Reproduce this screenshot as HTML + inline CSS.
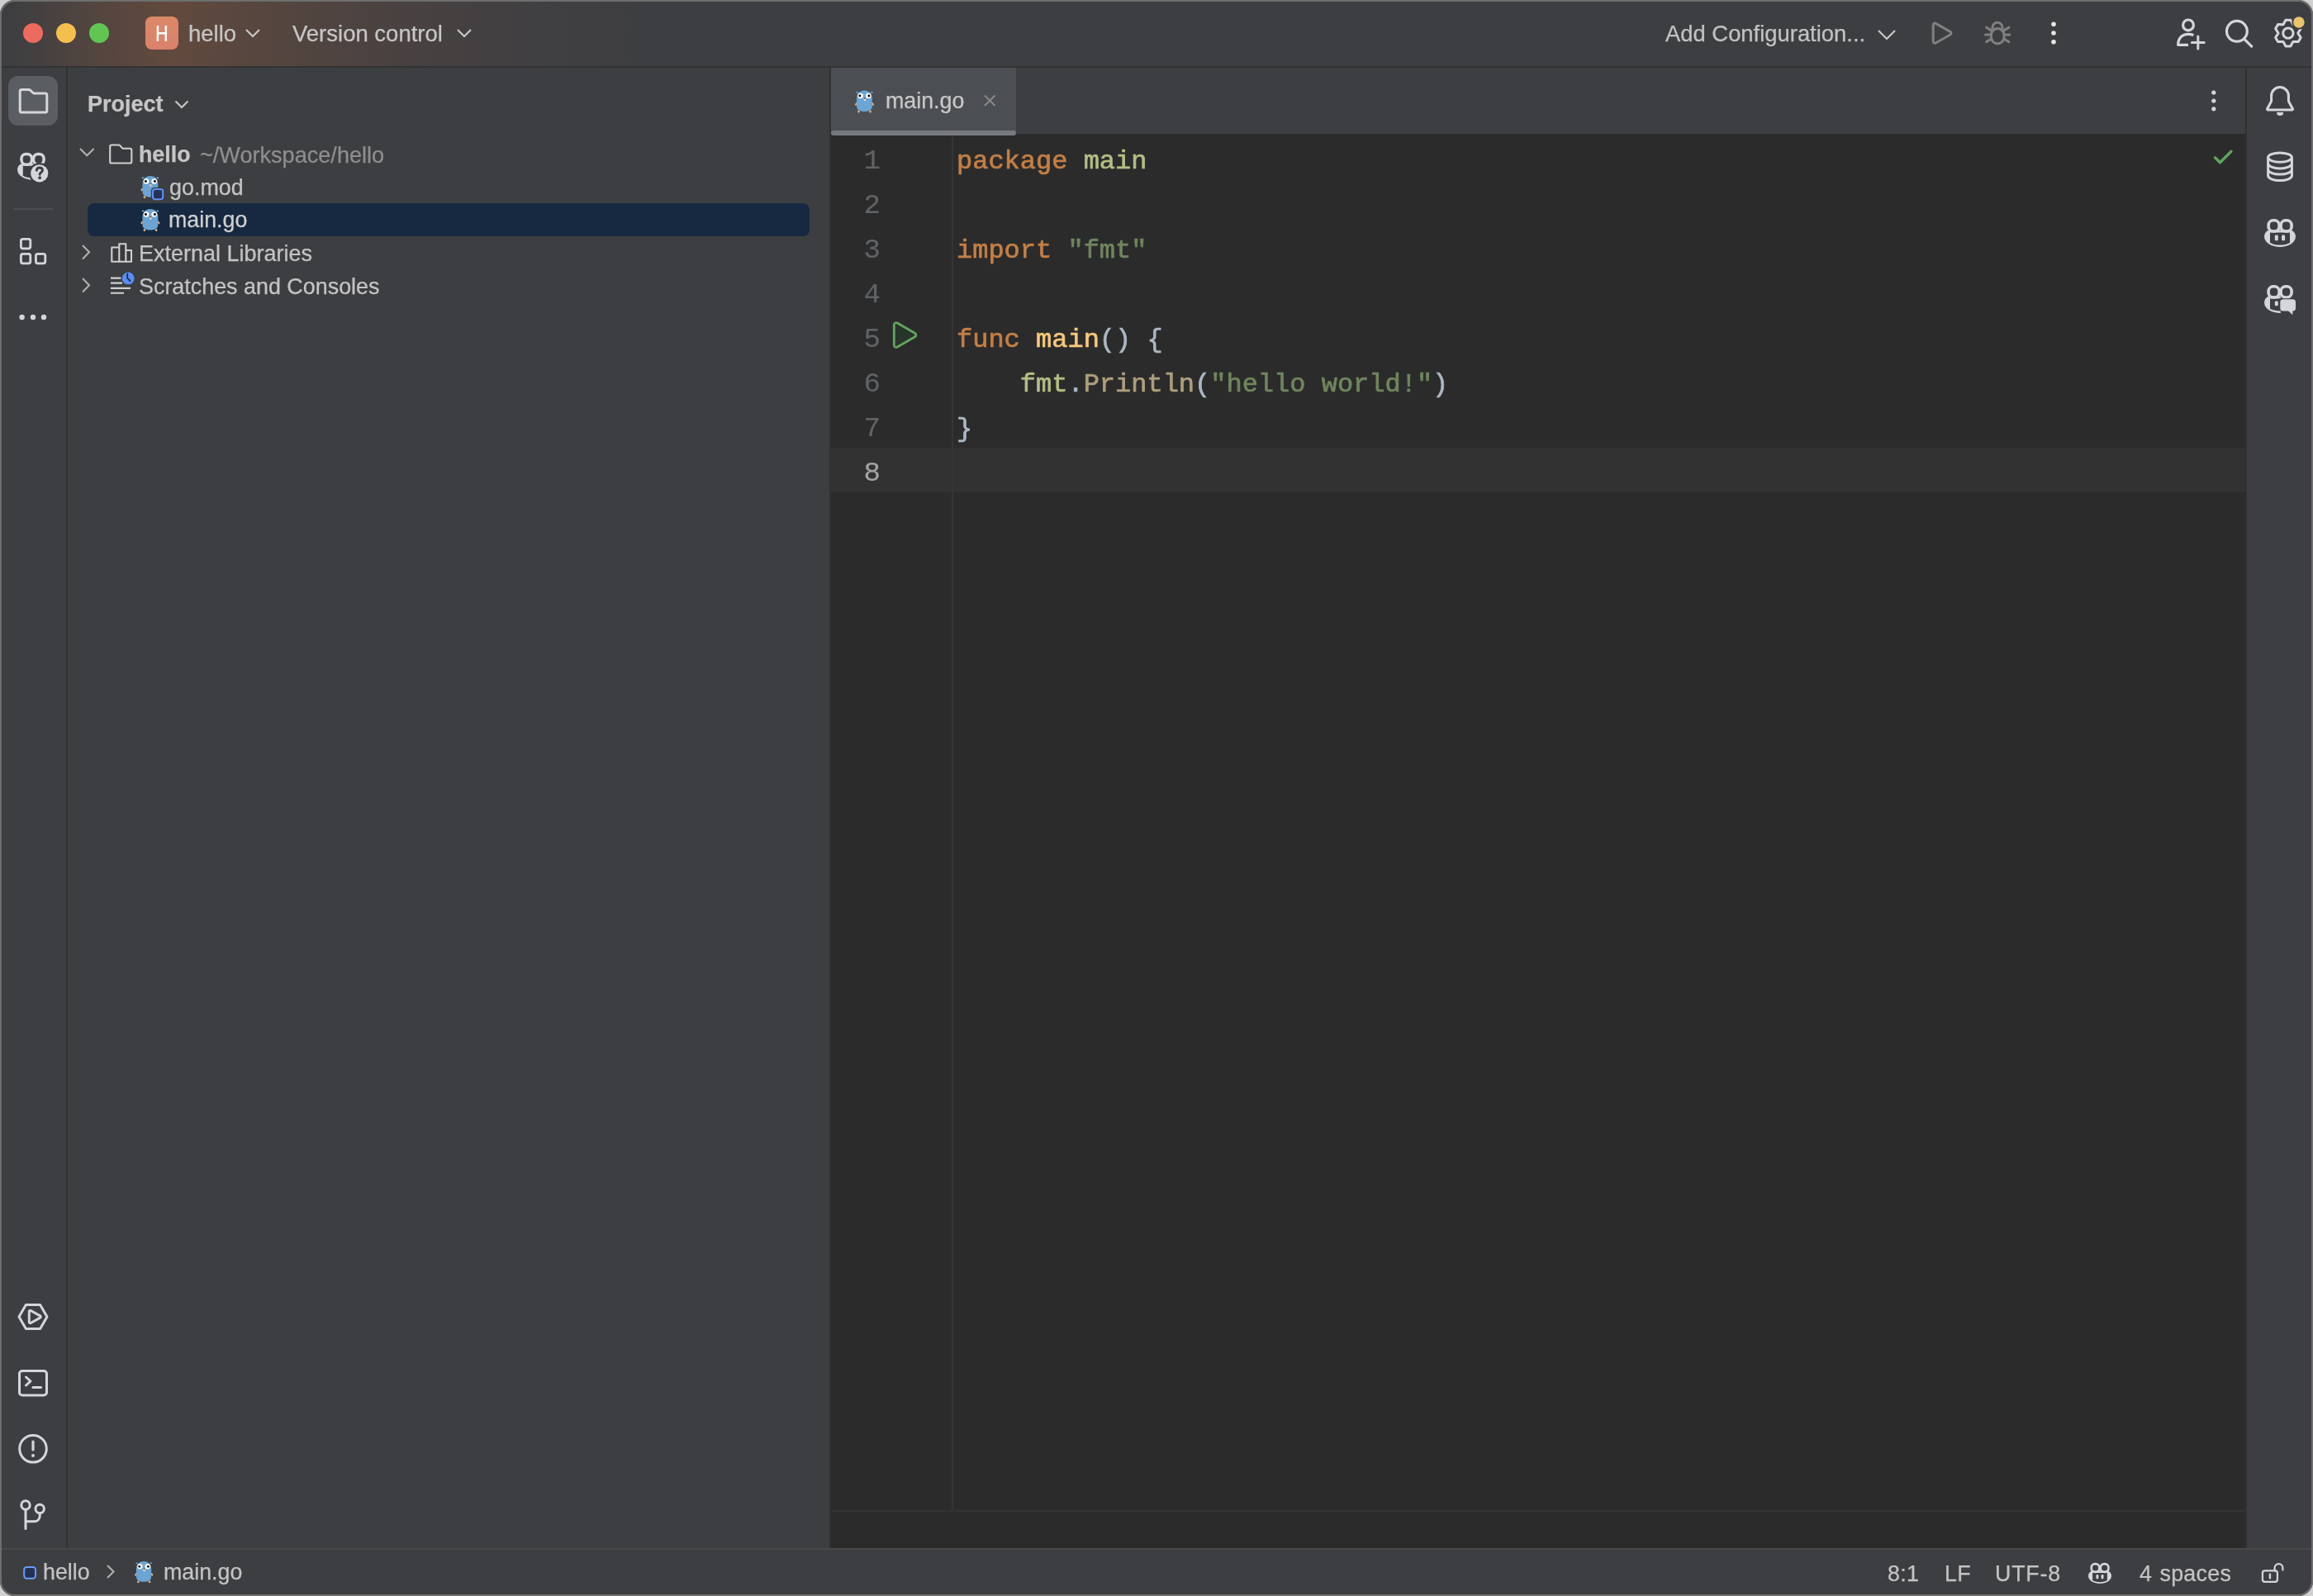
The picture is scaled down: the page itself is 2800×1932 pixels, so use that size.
<!DOCTYPE html>
<html><head><meta charset="utf-8">
<style>
*{margin:0;padding:0;box-sizing:border-box}
html,body{width:2800px;height:1932px;overflow:hidden;background:#d0d0d0}
body{font-family:"Liberation Sans",sans-serif;position:relative;-webkit-font-smoothing:antialiased}
#win{position:absolute;left:0;top:0;width:2800px;height:1932px;border-radius:18px;background:#3d3e41;overflow:hidden}
#frame{position:absolute;left:0;top:0;width:2800px;height:1932px;border-radius:18px;border:2px solid #6e6e6e;pointer-events:none}
.p{position:absolute}
.tl{position:absolute;width:24px;height:24px;border-radius:50%}
.ui{position:absolute;font-family:"Liberation Sans",sans-serif;font-size:26.7px;color:#c4c4c4;white-space:nowrap;line-height:1;will-change:transform;-webkit-text-stroke:0.25px currentColor}
.code{font-family:"Liberation Mono",monospace;font-size:32px;line-height:54px;white-space:pre;position:absolute;-webkit-text-stroke:0.7px currentColor;will-change:transform}
.kw{color:#c47f45}.pk{color:#b2be85}.st{color:#70865e}.fn{color:#f6c87b}.df{color:#acb7c4}.cl{color:#ad9e7d}
.ln{color:#606366}
svg{position:absolute;overflow:visible}
</style></head><body>
<div id="win">
  <!-- ============ title bar ============ -->
  <div class="p" style="left:0;top:0;width:1100px;height:80px;background:linear-gradient(90deg,rgba(100,74,62,0) 10px,rgba(100,74,62,.55) 110px,rgba(100,74,62,.95) 207px,rgba(92,72,62,.75) 330px,rgba(88,70,64,.45) 480px,rgba(80,68,66,.18) 640px,rgba(61,62,65,0) 780px)"></div>
  <div class="tl" style="left:28px;top:28px;background:#ed6a5e"></div>
  <div class="tl" style="left:68px;top:28px;background:#f5bf4f"></div>
  <div class="tl" style="left:108px;top:28px;background:#61c554"></div>
  <div class="p" style="left:176px;top:20px;width:40px;height:40px;border-radius:8px;background:linear-gradient(160deg,#dc8a66 0%,#d9806c 100%)"></div>
  <svg style="left:0;top:0" width="1" height="1"><path d="M190.9 31v19M200.8 31v19M190.9 40.2h9.9" stroke="#fff" stroke-width="2.5" fill="none"/></svg>
  <div class="ui" style="left:228.4px;top:26.7px;color:#c6c6c6;font-size:27.5px">hello</div>
  <svg style="left:0;top:0" width="1" height="1"><path d="M298 36l8 8l8-8" stroke="#c8c8c8" stroke-width="2.2" fill="none"/></svg>
  <div class="ui" style="left:354.2px;top:26.7px;color:#c6c6c6;font-size:27.5px">Version control</div>
  <svg style="left:0;top:0" width="1" height="1"><path d="M554 36l8 8l8-8" stroke="#c8c8c8" stroke-width="2.2" fill="none"/></svg>
  <div class="ui" style="left:2016.2px;top:26.7px;color:#c2c2c2;font-size:27.4px">Add Configuration...</div>
  <svg style="left:0;top:0" width="1" height="1"><path d="M2274 37l10 10l10-10" stroke="#c8c8c8" stroke-width="2.2" fill="none"/></svg>
  <svg style="left:0;top:0" width="1" height="1">
    <path d="M2340.2 30.2c0-1.6 1.7-2.6 3.1-1.8l17.6 10c1.4 0.8 1.4 2.8 0 3.6l-17.6 10c-1.4 0.8-3.1-0.2-3.1-1.8z" fill="none" stroke="#808080" stroke-width="3" stroke-linejoin="round"/>
    <path d="M2412 35.5v-2.2a6 6 0 0 1 12 0v2.2" fill="none" stroke="#808080" stroke-width="3"/>
    <rect x="2410.4" y="34.6" width="15.6" height="18.2" rx="7.8" fill="none" stroke="#808080" stroke-width="3"/>
    <path d="M2404.6 33.2l5.6 3.4M2403.5 42h6M2404.6 50.6l5.6-3.4M2431.8 33.2l-5.6 3.4M2432.9 42h-6M2431.8 50.6l-5.6-3.4" stroke="#808080" stroke-width="3" stroke-linecap="round"/>
    <circle cx="2486" cy="29.2" r="2.8" fill="#e6e6e6"/><circle cx="2486" cy="40" r="2.8" fill="#e6e6e6"/><circle cx="2486" cy="50.8" r="2.8" fill="#e6e6e6"/>
    <circle cx="2649" cy="30.4" r="6.4" fill="none" stroke="#d4d6db" stroke-width="3.2"/>
    <path d="M2655.4 42.6C2653 41.7 2651 41.3 2649 41.3C2641.5 41.3 2636.6 46.7 2636.6 54.3H2649" fill="none" stroke="#d4d6db" stroke-width="3.2" stroke-linejoin="round"/>
    <path d="M2660.8 44.1v14.8M2653.4 51.5h14.8" stroke="#d4d6db" stroke-width="3" stroke-linecap="round"/>
    <circle cx="2707.9" cy="37.8" r="12.4" fill="none" stroke="#d4d6db" stroke-width="3.2"/>
    <path d="M2716.5 47.2l9.2 9" stroke="#d4d6db" stroke-width="3.2" stroke-linecap="round"/>
    <path d="M2775.85 29.79 L2772.85 24.17 L2766.95 24.17 L2763.95 29.79 L2757.58 29.58 L2754.63 34.69 L2758.00 40.10 L2754.63 45.51 L2757.58 50.62 L2763.95 50.41 L2766.95 56.03 L2772.85 56.03 L2775.85 50.41 L2782.22 50.62 L2785.17 45.51 L2781.80 40.10 L2785.17 34.69 L2782.22 29.58Z" fill="none" stroke="#d4d6db" stroke-width="3" stroke-linejoin="round"/><circle cx="2769.9" cy="40.1" r="6.2" fill="none" stroke="#d4d6db" stroke-width="3"/>
    <circle cx="2782.9" cy="27" r="8.6" fill="#3d3e41"/><circle cx="2782.9" cy="27" r="6.8" fill="#e9c56b"/>
  </svg>
  <div class="p" style="left:0;top:80px;width:2800px;height:2px;background:#323232"></div>

  <!-- ============ left strip ============ -->
  <div class="p" style="left:80px;top:82px;width:2px;height:1792px;background:#313131"></div>
  <div class="p" style="left:10px;top:92px;width:60px;height:60px;border-radius:12px;background:#5a5d61"></div>
  <svg style="left:0;top:0" width="1" height="1">
    <path d="M26.2 108.6h8.6c0.8 0 1.4 0.3 2 0.8l3.9 3.6h14.1c1.1 0 2 0.9 2 2v18.9c0 1.1-0.9 2-2 2h-28.6c-1.1 0-2-0.9-2-2v-23.3c0-1.1 0.9-2 2-2z" fill="none" stroke="#d4d6db" stroke-width="3" stroke-linejoin="round"/>
    <g transform="translate(20.8,184.7) scale(0.97)"><path d="M0.3 21.5C0.3 17 3 14.6 6 13.6H20V34C9.4 34 0.3 29 0.3 21.5Z" fill="#d4d6db"/><path d="M7.2 16.5H20V31.6C15.4 31.4 10.4 30.8 7.2 28.8Z" fill="#3d3e41"/><rect x="5.3" y="1.8" width="13" height="13.2" rx="5.8" fill="none" stroke="#d4d6db" stroke-width="3.6"/><rect x="20.3" y="1.8" width="13" height="13.2" rx="5.8" fill="none" stroke="#d4d6db" stroke-width="3.6"/><circle cx="27.8" cy="25.9" r="13.2" fill="#3d3e41"/><circle cx="27.8" cy="25.9" r="10.9" fill="#d4d6db"/><path d="M24.3 22.2C24.3 19.9 26 18.8 27.9 18.8C30 18.8 31.6 20 31.6 22C31.6 24.6 28.2 24.7 28.2 27.4" fill="none" stroke="#3d3e41" stroke-width="3" stroke-linecap="round"/><circle cx="28.2" cy="31.4" r="1.9" fill="#3d3e41"/></g>
    <path d="M16 253h48" stroke="#4a4d52" stroke-width="2"/>
    <rect x="25.4" y="289.4" width="11.4" height="11.4" rx="2.2" fill="none" stroke="#d4d6db" stroke-width="2.8"/>
    <rect x="25.4" y="307.4" width="11.4" height="11.4" rx="2.2" fill="none" stroke="#d4d6db" stroke-width="2.8"/>
    <rect x="43.4" y="307.4" width="11.4" height="11.4" rx="2.2" fill="none" stroke="#d4d6db" stroke-width="2.8"/>
    <circle cx="26.6" cy="384" r="3.2" fill="#d4d6db"/><circle cx="40" cy="384" r="3.2" fill="#d4d6db"/><circle cx="53" cy="384" r="3.2" fill="#d4d6db"/>
    <path d="M31.4 1579.6h17.2l8.4 14.4l-8.4 14.4h-17.2l-8.4-14.4z" fill="none" stroke="#d4d6db" stroke-width="3" stroke-linejoin="round"/>
    <path d="M35.3 1587.6c0-1 1-1.6 1.9-1.1l11.4 6.4c0.9 0.5 0.9 1.7 0 2.2l-11.4 6.4c-0.9 0.5-1.9-0.1-1.9-1.1z" fill="none" stroke="#d4d6db" stroke-width="3" stroke-linejoin="round"/>
    <rect x="23.5" y="1659.5" width="33" height="29.5" rx="3.5" fill="none" stroke="#d4d6db" stroke-width="3"/>
    <path d="M31.5 1667l5.5 5l-5.5 5" fill="none" stroke="#d4d6db" stroke-width="3" stroke-linecap="round" stroke-linejoin="round"/>
    <path d="M40 1679.5h9.5" stroke="#d4d6db" stroke-width="3" stroke-linecap="round"/>
    <circle cx="40" cy="1753.8" r="16.3" fill="none" stroke="#d4d6db" stroke-width="3"/>
    <path d="M40 1745v10" stroke="#d4d6db" stroke-width="3.2" stroke-linecap="round"/><circle cx="40" cy="1762" r="2" fill="#d4d6db"/>
    <circle cx="31" cy="1822" r="5.2" fill="none" stroke="#d4d6db" stroke-width="3"/>
    <circle cx="48.2" cy="1826.5" r="5.2" fill="none" stroke="#d4d6db" stroke-width="3"/>
    <path d="M31 1827.2V1850.5M48.2 1831.7v3.3c0 4-3 6.8-7 6.8H31" fill="none" stroke="#d4d6db" stroke-width="3" stroke-linecap="round"/>
  </svg>

  <!-- ============ project panel ============ -->
  <div class="ui" style="left:106px;top:113px;font-weight:bold;font-size:27px;color:#c6c6c6">Project</div>
  <svg style="left:0;top:0" width="1" height="1"><path d="M212.5 122.5l7.5 7.5l7.5-7.5" stroke="#c6c6c6" stroke-width="2.2" fill="none"/></svg>
  <div class="p" style="left:106px;top:246px;width:874px;height:40px;border-radius:8px;background:#172940"></div>
  <svg style="left:0;top:0" width="1" height="1">
    <path d="M97 180l8.3 8.3l8.3-8.3" stroke="#b0b0b0" stroke-width="2.1" fill="none"/>
    <path d="M135 175.5h8.5c1 0 1.6 0.4 2.2 1.1l2.6 3.1h9.2c1.1 0 1.8 0.7 1.8 1.8v14.2c0 1.1-0.7 1.8-1.8 1.8h-22.5c-1.1 0-1.8-0.7-1.8-1.8v-18.4c0-1.1 0.7-1.8 1.8-1.8z" stroke="#d0d0d0" stroke-width="2.1" fill="#393a3e" stroke-linejoin="round"/>
    <path d="M100 297l8 8.2l-8 8.2" stroke="#b0b0b0" stroke-width="2.1" fill="none"/>
    <path d="M100 337l8 8.2l-8 8.2" stroke="#b0b0b0" stroke-width="2.1" fill="none"/>
    <path d="M135.3 299.5h9v17.2h-9zM144.3 295.2h8v21.5h-8zM152.3 303h6.7v13.7h-6.7z" stroke="#d0d0d0" stroke-width="2.1" fill="#393a3e" stroke-linejoin="round"/>
    <path d="M134 336.6h12.5M134 342.6h14M134 348.9h24M134 354.8h16" stroke="#d0d0d0" stroke-width="2.1" fill="none"/>
    <circle cx="155.2" cy="336.9" r="7.4" fill="#5a8ef3"/><path d="M154.2 331.5v5.2l3.2 3.3" stroke="#1d2c48" stroke-width="1.8" fill="none" stroke-linecap="round"/>
    <g transform="translate(171.5,212.5)"><ellipse cx="1.6" cy="2.9" rx="1.4" ry="0.8" fill="#7bb2dd"/><ellipse cx="19.4" cy="2.9" rx="1.4" ry="0.8" fill="#7bb2dd"/><ellipse cx="0.4" cy="17" rx="1.1" ry="1.9" transform="rotate(30 0.4 17)" fill="#dfb38e"/><ellipse cx="20.6" cy="17" rx="1.1" ry="1.9" transform="rotate(-30 20.6 17)" fill="#dfb38e"/><ellipse cx="3.4" cy="26" rx="1.3" ry="1.6" fill="#dfb38e"/><ellipse cx="17.6" cy="26" rx="1.3" ry="1.6" fill="#dfb38e"/><path d="M1 10.5C1 3.8 5 0.4 10.4 0.4S19.8 3.8 19.8 10.5V19.5C19.8 24 16 26 10.4 26S1 24 1 19.5Z" fill="#6ca5d3"/><circle cx="5.6" cy="7" r="3.3" fill="#fff"/><circle cx="15.2" cy="7" r="3.3" fill="#fff"/><circle cx="4.9" cy="7" r="1.45" fill="#000"/><circle cx="15.9" cy="7" r="1.45" fill="#000"/><ellipse cx="10.8" cy="11" rx="1.6" ry="1.4" fill="#e6bfa0"/><rect x="10.1" y="11.8" width="1.5" height="1.3" fill="#fff"/><path d="M9.8 9.6h2l-1 1.3z" fill="#111"/></g>
    <rect x="182.8" y="226.8" width="16.6" height="16.6" rx="4.5" fill="#3d3e41"/>
    <rect x="185" y="229" width="12.2" height="12.2" rx="3" fill="#263153" stroke="#5f8ff2" stroke-width="2.1"/>
    <g transform="translate(171.5,252.5)"><ellipse cx="1.6" cy="2.9" rx="1.4" ry="0.8" fill="#7bb2dd"/><ellipse cx="19.4" cy="2.9" rx="1.4" ry="0.8" fill="#7bb2dd"/><ellipse cx="0.4" cy="17" rx="1.1" ry="1.9" transform="rotate(30 0.4 17)" fill="#dfb38e"/><ellipse cx="20.6" cy="17" rx="1.1" ry="1.9" transform="rotate(-30 20.6 17)" fill="#dfb38e"/><ellipse cx="3.4" cy="26" rx="1.3" ry="1.6" fill="#dfb38e"/><ellipse cx="17.6" cy="26" rx="1.3" ry="1.6" fill="#dfb38e"/><path d="M1 10.5C1 3.8 5 0.4 10.4 0.4S19.8 3.8 19.8 10.5V19.5C19.8 24 16 26 10.4 26S1 24 1 19.5Z" fill="#6ca5d3"/><circle cx="5.6" cy="7" r="3.3" fill="#fff"/><circle cx="15.2" cy="7" r="3.3" fill="#fff"/><circle cx="4.9" cy="7" r="1.45" fill="#000"/><circle cx="15.9" cy="7" r="1.45" fill="#000"/><ellipse cx="10.8" cy="11" rx="1.6" ry="1.4" fill="#e6bfa0"/><rect x="10.1" y="11.8" width="1.5" height="1.3" fill="#fff"/><path d="M9.8 9.6h2l-1 1.3z" fill="#111"/></g>
  </svg>
  <div class="ui" style="left:168px;top:173.5px;font-weight:bold;font-size:26.8px;color:#c6c6c6">hello</div>
  <div class="ui" style="left:242px;top:173.5px;color:#8e8e8e;font-size:27.1px">~/Workspace/hello</div>
  <div class="ui" style="left:205px;top:213.7px;font-size:26.9px">go.mod</div>
  <div class="ui" style="left:204px;top:253.4px;font-size:26.8px;color:#d0d0d0">main.go</div>
  <div class="ui" style="left:167.5px;top:293.8px;font-size:27px">External Libraries</div>
  <div class="ui" style="left:168px;top:333.8px;font-size:26.9px">Scratches and Consoles</div>
  <div class="p" style="left:1004px;top:82px;width:2px;height:1792px;background:#313131"></div>

  <!-- ============ editor ============ -->
  <div class="p" style="left:1006px;top:82px;width:224px;height:80px;background:#4b4e52"></div><div class="p" style="left:1230px;top:82px;width:1488px;height:80px;background:#3d3e41"></div>
  <div class="p" style="left:1006px;top:162px;width:1712px;height:1712px;background:#2b2b2b"></div>
  <div class="p" style="left:1006px;top:158px;width:224px;height:6px;border-radius:3px;background:#767a7f"></div>
  <div class="p" style="left:1006px;top:542px;width:1712px;height:54px;background:#323232"></div>
  <div class="p" style="left:1152px;top:164px;width:2px;height:1664px;background:#353535"></div>
  <div class="p" style="left:1006px;top:1828px;width:1712px;height:2px;background:#333333"></div>
  <div class="p" style="left:2718px;top:82px;width:2px;height:1792px;background:#313131"></div>
  <svg style="left:0;top:0" width="1" height="1"><g transform="translate(1036,109)"><ellipse cx="1.6" cy="2.9" rx="1.4" ry="0.8" fill="#7bb2dd"/><ellipse cx="19.4" cy="2.9" rx="1.4" ry="0.8" fill="#7bb2dd"/><ellipse cx="0.4" cy="17" rx="1.1" ry="1.9" transform="rotate(30 0.4 17)" fill="#dfb38e"/><ellipse cx="20.6" cy="17" rx="1.1" ry="1.9" transform="rotate(-30 20.6 17)" fill="#dfb38e"/><ellipse cx="3.4" cy="26" rx="1.3" ry="1.6" fill="#dfb38e"/><ellipse cx="17.6" cy="26" rx="1.3" ry="1.6" fill="#dfb38e"/><path d="M1 10.5C1 3.8 5 0.4 10.4 0.4S19.8 3.8 19.8 10.5V19.5C19.8 24 16 26 10.4 26S1 24 1 19.5Z" fill="#6ca5d3"/><circle cx="5.6" cy="7" r="3.3" fill="#fff"/><circle cx="15.2" cy="7" r="3.3" fill="#fff"/><circle cx="4.9" cy="7" r="1.45" fill="#000"/><circle cx="15.9" cy="7" r="1.45" fill="#000"/><ellipse cx="10.8" cy="11" rx="1.6" ry="1.4" fill="#e6bfa0"/><rect x="10.1" y="11.8" width="1.5" height="1.3" fill="#fff"/><path d="M9.8 9.6h2l-1 1.3z" fill="#111"/></g>
    <path d="M1192 115.5l12.5 12.5M1204.5 115.5l-12.5 12.5" stroke="#8c8c8c" stroke-width="1.8"/>
    <path d="M1082.3 393.2c0-2.2 2.1-3.3 4-2.2l21.2 12.2c1.9 1.1 1.9 3.5 0 4.6l-21.2 12.2c-1.9 1.1-4-0.1-4-2.2z" fill="#27352a" stroke="#62a35f" stroke-width="2.8" stroke-linejoin="round"/>
  </svg>
  <div class="ui" style="left:1072px;top:109.4px;font-size:26.8px;color:#c8c8c8">main.go</div>
  <div class="code" style="left:1025.5px;top:168px;width:40px;text-align:right;font-size:34px;-webkit-text-stroke:0.2px currentColor"><span class="ln">1</span>
<span class="ln">2</span>
<span class="ln">3</span>
<span class="ln">4</span>
<span class="ln">5</span>
<span class="ln">6</span>
<span class="ln">7</span>
<span style="color:#a4a3a3">8</span></div>
  <div class="code" style="left:1158px;top:168.5px"><span class="kw">package</span> <span class="pk">main</span>

<span class="kw">import</span> <span class="st">"fmt"</span>

<span class="kw">func</span> <span class="fn">main</span><span class="df">() {</span>
    <span class="pk">fmt</span><span class="df">.</span><span class="cl">Println</span><span class="df">(</span><span class="st">"hello world!"</span><span class="df">)</span>
<span class="df">}</span>
</div>

  <!-- ============ right strip ============ -->
  <svg style="left:0;top:0" width="1" height="1">
    <circle cx="2679.8" cy="112" r="2.6" fill="#d4d6db"/><circle cx="2679.8" cy="122" r="2.6" fill="#d4d6db"/><circle cx="2679.8" cy="131.8" r="2.6" fill="#d4d6db"/>
    <path d="M2681.5 190.8l6 6l13.5-13.5" fill="none" stroke="#5fa35f" stroke-width="3.4" stroke-linecap="round" stroke-linejoin="round"/>
    <path d="M2749.6 122.5v-6.5a10.4 10.4 0 0 1 20.8 0v6.5l5 9.2c0.4 0.8-0.1 1.4-1 1.4h-28.8c-0.9 0-1.4-0.6-1-1.4z" fill="none" stroke="#d4d6db" stroke-width="3" stroke-linejoin="round"/>
    <path d="M2756 136h8.2a4.1 4.1 0 0 1-8.2 0z" fill="#d4d6db"/>
    <ellipse cx="2760" cy="190.6" rx="14.4" ry="5.6" fill="none" stroke="#d4d6db" stroke-width="3"/>
    <path d="M2745.6 190.6V212.5c0 3.4 6.4 6.1 14.4 6.1s14.4-2.7 14.4-6.1V190.6M2745.6 197.8c0 3.4 6.4 6.1 14.4 6.1s14.4-2.7 14.4-6.1M2745.6 205c0 3.4 6.4 6.1 14.4 6.1s14.4-2.7 14.4-6.1" fill="none" stroke="#d4d6db" stroke-width="3"/>
    <g transform="translate(2740.8,265) scale(1.0)"><path d="M0.3 21.5C0.3 17 3 14.6 6 13.6H32.4C35.4 14.6 38.1 17 38.1 21.5C38.1 29 29 34 19.2 34C9.4 34 0.3 29 0.3 21.5Z" fill="#d4d6db"/><path d="M7.2 16.5H31.2V28.8C28 30.8 24 31.6 19.2 31.6C14.4 31.6 10.4 30.8 7.2 28.8Z" fill="#3d3e41"/><rect x="5.3" y="1.8" width="13" height="13.2" rx="5.8" fill="none" stroke="#d4d6db" stroke-width="3.6"/><rect x="20.3" y="1.8" width="13" height="13.2" rx="5.8" fill="none" stroke="#d4d6db" stroke-width="3.6"/><rect x="13" y="19.2" width="4" height="7.4" rx="2" fill="#d4d6db"/><rect x="21.3" y="19.2" width="4" height="7.4" rx="2" fill="#d4d6db"/></g>
    <g transform="translate(2740.8,345) scale(1.0)"><path d="M0.3 21.5C0.3 17 3 14.6 6 13.6H20V34C9.4 34 0.3 29 0.3 21.5Z" fill="#d4d6db"/><path d="M7.2 16.5H20V31.6C15.4 31.4 10.4 30.8 7.2 28.8Z" fill="#3d3e41"/><rect x="5.3" y="1.8" width="13" height="13.2" rx="5.8" fill="none" stroke="#d4d6db" stroke-width="3.6"/><rect x="20.3" y="1.8" width="13" height="13.2" rx="5.8" fill="none" stroke="#d4d6db" stroke-width="3.6"/><rect x="13" y="19.2" width="4" height="6.4" rx="2" fill="#d4d6db"/><path d="M17.8 16.3H38.4V33H29.8L34.2 37.2V33" fill="#3d3e41"/><rect x="19.6" y="17.2" width="18.6" height="14.4" rx="3.6" fill="#d4d6db"/><path d="M29 31H34.6V36.2Z" fill="#d4d6db"/></g>
  </svg>

  <!-- ============ status bar ============ -->
  <div class="p" style="left:0;top:1874px;width:2800px;height:2px;background:#474747"></div>
  <svg style="left:0;top:0" width="1" height="1">
    <rect x="29.2" y="1897" width="13.8" height="13.8" rx="3.2" fill="#263153" stroke="#6b9bfa" stroke-width="2"/>
    <path d="M130 1895l7.5 7.5l-7.5 7.5" fill="none" stroke="#b0b0b0" stroke-width="2.1"/>
    <g transform="translate(164,1889.5) scale(0.97)"><ellipse cx="1.6" cy="2.9" rx="1.4" ry="0.8" fill="#7bb2dd"/><ellipse cx="19.4" cy="2.9" rx="1.4" ry="0.8" fill="#7bb2dd"/><ellipse cx="0.4" cy="17" rx="1.1" ry="1.9" transform="rotate(30 0.4 17)" fill="#dfb38e"/><ellipse cx="20.6" cy="17" rx="1.1" ry="1.9" transform="rotate(-30 20.6 17)" fill="#dfb38e"/><ellipse cx="3.4" cy="26" rx="1.3" ry="1.6" fill="#dfb38e"/><ellipse cx="17.6" cy="26" rx="1.3" ry="1.6" fill="#dfb38e"/><path d="M1 10.5C1 3.8 5 0.4 10.4 0.4S19.8 3.8 19.8 10.5V19.5C19.8 24 16 26 10.4 26S1 24 1 19.5Z" fill="#6ca5d3"/><circle cx="5.6" cy="7" r="3.3" fill="#fff"/><circle cx="15.2" cy="7" r="3.3" fill="#fff"/><circle cx="4.9" cy="7" r="1.45" fill="#000"/><circle cx="15.9" cy="7" r="1.45" fill="#000"/><ellipse cx="10.8" cy="11" rx="1.6" ry="1.4" fill="#e6bfa0"/><rect x="10.1" y="11.8" width="1.5" height="1.3" fill="#fff"/><path d="M9.8 9.6h2l-1 1.3z" fill="#111"/></g>
    <g transform="translate(2527.8,1891.8) scale(0.74)"><path d="M0.3 21.5C0.3 17 3 14.6 6 13.6H32.4C35.4 14.6 38.1 17 38.1 21.5C38.1 29 29 34 19.2 34C9.4 34 0.3 29 0.3 21.5Z" fill="#d4d6db"/><path d="M7.2 16.5H31.2V28.8C28 30.8 24 31.6 19.2 31.6C14.4 31.6 10.4 30.8 7.2 28.8Z" fill="#3d3e41"/><rect x="5.3" y="1.8" width="13" height="13.2" rx="5.8" fill="none" stroke="#d4d6db" stroke-width="3.6"/><rect x="20.3" y="1.8" width="13" height="13.2" rx="5.8" fill="none" stroke="#d4d6db" stroke-width="3.6"/><rect x="13" y="19.2" width="4" height="7.4" rx="2" fill="#d4d6db"/><rect x="21.3" y="19.2" width="4" height="7.4" rx="2" fill="#d4d6db"/></g>
    <rect x="2738.9" y="1901.4" width="18" height="13.4" rx="2.8" fill="none" stroke="#d4d6db" stroke-width="2.2"/>
    <path d="M2747.9 1905.6v4.6" stroke="#d4d6db" stroke-width="2.4" stroke-linecap="round"/>
    <path d="M2753.6 1901.4v-3.4a4.9 4.9 0 0 1 9.8 0v2.6" fill="none" stroke="#d4d6db" stroke-width="2.2" stroke-linecap="round"/>
  </svg>
  <div class="ui" style="left:52px;top:1890px;font-size:26.8px;color:#c4c4c4">hello</div>
  <div class="ui" style="left:198px;top:1890px;font-size:26.8px;color:#c4c4c4">main.go</div>
  <div class="ui" style="left:2285px;top:1891.5px;font-size:26.8px;color:#c4c4c4;letter-spacing:0.3px">8:1</div>
  <div class="ui" style="left:2354px;top:1891.5px;font-size:26.8px;color:#c4c4c4;letter-spacing:0.3px">LF</div>
  <div class="ui" style="left:2415px;top:1891.5px;font-size:26.8px;color:#c4c4c4;letter-spacing:0.8px">UTF-8</div>
  <div class="ui" style="left:2590px;top:1891.5px;font-size:26.8px;color:#c4c4c4;letter-spacing:0.3px;word-spacing:1.5px">4 spaces</div>
</div>
<div id="frame"></div>
</body></html>
